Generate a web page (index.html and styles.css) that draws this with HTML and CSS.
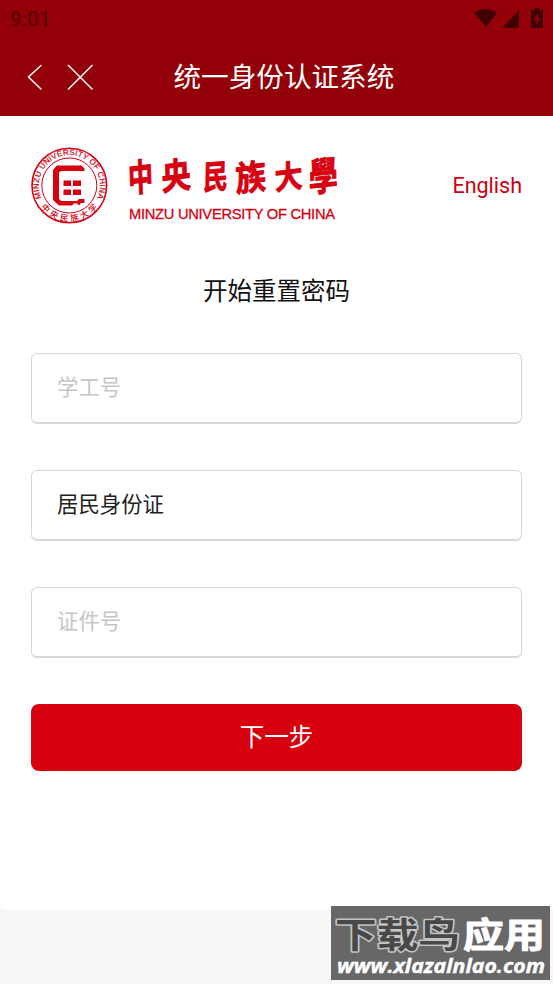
FILE: index.html
```html
<!DOCTYPE html>
<html lang="zh-CN">
<head>
<meta charset="utf-8">
<title>统一身份认证系统</title>
<link rel="stylesheet" href="styles.css">
</head>
<body>
<header class="top">
  <div class="status">
    <span class="clock">9:01</span>
    <svg class="status-icons" width="74" height="38" viewBox="0 0 74 38">
      <path d="M4.300 13Q15.500 5 27 13L16 27Z"/>
      <path d="M32 28 49 10.500V28Z"/>
      <path d="M62 10h2.500V8h5v2H72q1 0 1 1v16q0 1-1 1H62q-1 0-1-1V11q0-1 1-1Z"/>
      <path class="bolt" d="m68 13-4 7h2.500v5l4-7H68Z"/>
    </svg>
  </div>
  <div class="nav">
    <svg class="nav-icons" width="68" height="28" viewBox="0 0 68 28">
      <path d="M14.500 2 1.500 14l13 12.500M41 2l24.500 24.500M65.500 2 41 26.500"/>
    </svg>
    <h1 class="title">统一身份认证系统</h1>
  </div>
</header>
<main class="card">
  <div class="brand">
    <svg class="logo" width="310" height="80" viewBox="0 0 310 80">
      <defs>
        <path id="arc-top" d="M13 56.500A30.500 30.500 0 1 1 63.600 56.500"/>
        <path id="arc-bottom" d="M2.500 39.500A35.800 35.800 0 0 0 74.100 39.500"/>
      </defs>
      <circle class="ring" cx="38.300" cy="39.500" r="37.300"/>
      <circle class="ring thin" cx="38.300" cy="39.500" r="27.500"/>
      <text class="seal-en"><textPath href="#arc-top" startOffset="50%" text-anchor="middle" textLength="121">MINZU UNIVERSITY OF CHINA</textPath></text>
      <text class="seal-cn"><textPath href="#arc-bottom" startOffset="50%" text-anchor="middle" textLength="66">中央民族大学</textPath></text>
      <path class="emblem" d="M26 19.500H50.500L53.500 22.500V25H31Q28 25 28 28V51Q28 55 31 55H46L48 53H53.500V57H50L48 59.500 46 57.500H43L41 59.500H28L22 54V24Z"/>
      <path class="emblem" d="M32.500 34.500h7.500v5.500h-7.500Zm9.500 0h8v5.500h-8ZM32.500 43.500h7.500v5.500h-7.500Zm9.500 0h8v5.500h-8Z"/>
      <g class="script">
        <text transform="translate(97.500 46.500) rotate(-7) skewX(-5) scale(.84 1.240)">中</text>
        <text transform="translate(131 44.500) rotate(-7) skewX(-5) scale(.98 1.180)">央</text>
        <text transform="translate(172 43.500) rotate(-4) skewX(-5) scale(.83 1.100)">民</text>
        <text transform="translate(205 46) rotate(-7) skewX(-5) scale(1.020 1.150)">族</text>
        <text transform="translate(244 44) rotate(-7) skewX(-5) scale(.94 1.050)">大</text>
        <text transform="translate(278 46) rotate(-6) skewX(-5) scale(.97 1.300)">學</text>
      </g>
      <text class="brand-en" x="98" y="72.500" textLength="206">MINZU UNIVERSITY OF CHINA</text>
    </svg>
    <a class="lang">English</a>
  </div>
  <h2 class="heading">开始重置密码</h2>
  <form class="form">
    <div class="field hint">学工号</div>
    <div class="field">居民身份证</div>
    <div class="field hint">证件号</div>
    <div class="submit">下一步</div>
  </form>
</main>
<aside class="watermark">
  <svg width="219" height="74" viewBox="0 0 219 74">
    <text class="wm-dark" x="4" y="42" textLength="125" lengthAdjust="spacingAndGlyphs">下载鸟</text>
    <text class="wm-light" x="132" y="42" textLength="82" lengthAdjust="spacingAndGlyphs">应用</text>
    <text class="wm-url" x="6" y="67" textLength="208" lengthAdjust="spacingAndGlyphs">www.xlazalnlao.com</text>
  </svg>
</aside>
</body>
</html>
```
FILE: styles.css
```css
* { box-sizing: border-box; }
body {
  margin: 0;
  height: 984px;
  overflow: hidden;
  background: #f7f7f7;
  font-family: Roboto, "Noto Sans CJK SC", sans-serif;
}
h1, h2 { margin: 0; font-weight: 400; }
.top { height: 116px; background: #940008; }
.status {
  height: 38px;
  padding: 0 9px 0 10px;
  display: flex;
  justify-content: space-between;
}
.clock { font-size: 20.5px; line-height: 39px; color: #5c0005; font-weight: 500; }
.status-icons { fill: #400003; }
.status-icons .bolt { fill: #940008; }
.nav { height: 78px; display: flex; align-items: center; padding-left: 27px; }
.nav-icons { fill: none; stroke: #fff; stroke-width: 1.5; }
.title { margin-left: 78.5px; padding-top: 2px; font-size: 27.6px; line-height: 40px; color: #fff; }
.card {
  height: 794px;
  padding: 30px 31px 0;
  background: #fff;
  border-radius: 0 0 0 5px;
}
.brand { display: flex; justify-content: space-between; height: 80px; }
.logo { fill: #d70010; overflow: visible; }
.ring { fill: none; stroke: #d70010; stroke-width: 1.6; }
.thin { stroke-width: 1; }
.seal-en { font: 400 7.8px "Liberation Sans", sans-serif; stroke: #d70010; stroke-width: .2; }
.seal-cn { font: 500 8.5px "Noto Sans CJK SC", sans-serif; }
.script { font: 700 30px "Noto Sans CJK TC", sans-serif; stroke: #d70010; stroke-width: .8; stroke-linejoin: round; }
.brand-en { font: 400 14.7px "Liberation Sans", sans-serif; stroke: #d70010; stroke-width: .3; }
.lang { font-size: 21.5px; line-height: 79px; color: #c9000f; }
.heading { margin-top: 47px; font-size: 24.5px; line-height: 38px; color: #111; text-align: center; }
.form { margin-top: 42px; display: flex; flex-direction: column; gap: 46px; }
.field {
  height: 71px;
  padding-left: 25px;
  border: 1px solid #d8d8d8;
  border-bottom-width: 2px;
  border-radius: 6px;
  font-size: 21.4px;
  line-height: 67px;
  color: #222;
}
.hint { color: #c5c5c5; }
.submit {
  height: 67px;
  border-radius: 8px;
  background: #d7000f;
  color: #fff;
  font-size: 24.5px;
  line-height: 68px;
  text-align: center;
}
.watermark { position: absolute; left: 331px; top: 906px; width: 219px; height: 74px; background: #676767; }
.wm-dark, .wm-light { font: 700 35px "Noto Sans CJK SC", sans-serif; paint-order: stroke; stroke-linejoin: round; }
.wm-dark { fill: #484848; stroke: #c4c4c4; stroke-width: 3px; }
.wm-light { fill: #fff; stroke: #fff; stroke-width: 1px; }
.wm-url { font: italic 700 20px "Open Sans", sans-serif; fill: #fff; stroke: #fff; stroke-width: .4; }
```
